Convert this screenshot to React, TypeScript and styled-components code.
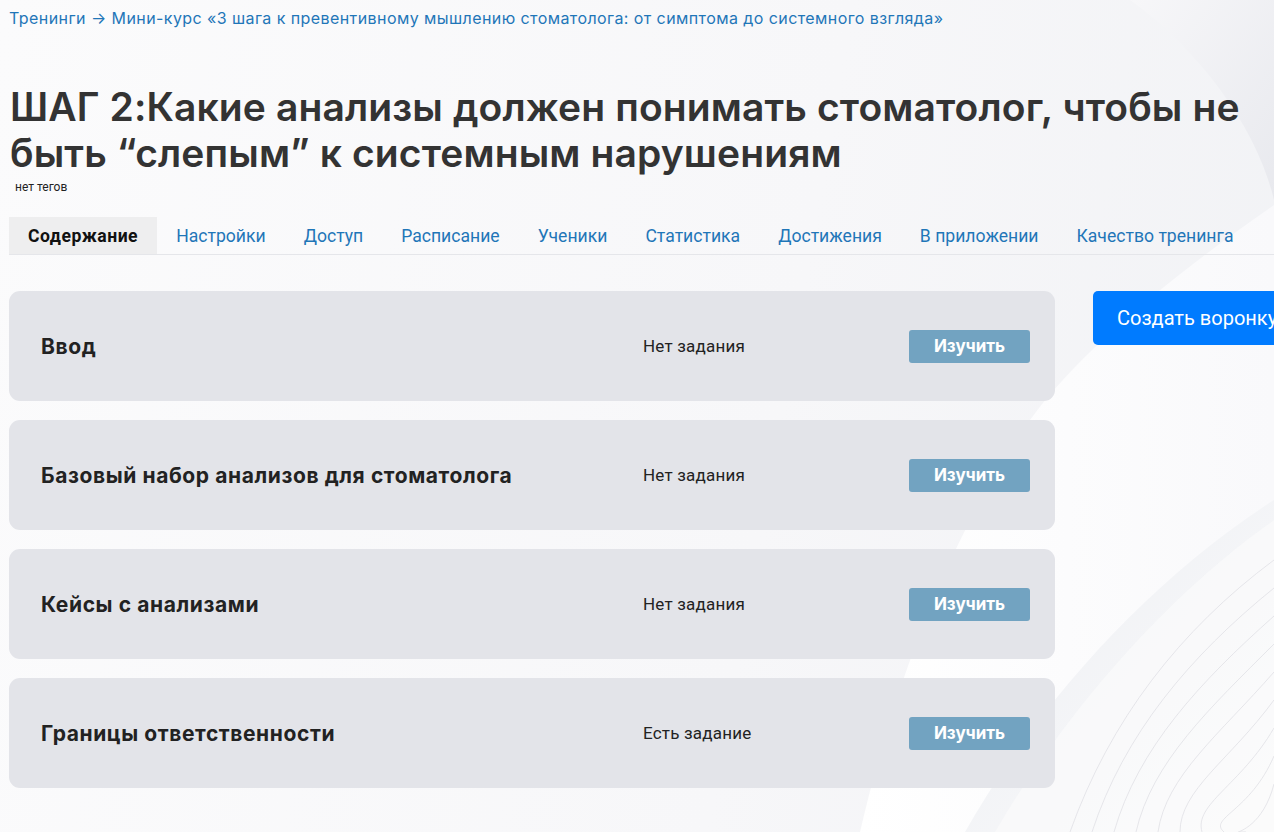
import * as React from 'react';
import styled, { createGlobalStyle } from 'styled-components';

const GlobalStyle = createGlobalStyle`
  html, body {
    margin: 0;
    padding: 0;
    height: 100%;
    overflow: hidden;
    background: #f6f6f8;
  }
  * {
    box-sizing: border-box;
  }
`;

const Page = styled.div`
  position: relative;
  width: 1274px;
  height: 832px;
  overflow: hidden;
  background: linear-gradient(100deg, #fbfbfc 0%, #f7f7f9 60%, #f1f2f5 100%);
  font-family: Roboto, 'Noto Sans', sans-serif;
`;

const Backdrop = styled.svg`
  position: absolute;
  inset: 0;
  width: 1274px;
  height: 832px;
  pointer-events: none;
`;

const Content = styled.div`
  position: relative;
  padding: 8px 0 0 9px;
`;

const Breadcrumb = styled.div`
  font-family: Inter, 'Noto Sans', sans-serif;
  font-size: 16px;
  line-height: 20px;
  color: #1f76b8;
  letter-spacing: 0.42px;
  white-space: nowrap;
`;

const Crumb = styled.a`
  color: inherit;
  text-decoration: none;
`;

const Title = styled.h1`
  margin: 56px 0 0 1px;
  font-family: Inter, 'Noto Sans', sans-serif;
  font-weight: 600;
  font-size: 39px;
  line-height: 46px;
  letter-spacing: 0.12px;
  color: #333333;
  white-space: nowrap;
`;

const Tags = styled.div`
  margin: 4px 0 0 6px;
  font-size: 12px;
  line-height: 14px;
  color: #222;
`;

const TabBar = styled.nav`
  display: flex;
  margin-top: 23px;
  height: 38px;
  border-bottom: 1px solid #e5e6ea;
`;

const Tab = styled.a<{ $active?: boolean }>`
  display: flex;
  align-items: center;
  height: 37px;
  padding: 0 19px;
  font-size: 17.6px;
  font-weight: ${({ $active }) => ($active ? 700 : 400)};
  letter-spacing: ${({ $active }) => ($active ? '0.5px' : '0')};
  color: ${({ $active }) => ($active ? '#111' : '#1f76b8')};
  background: ${({ $active }) => ($active ? '#eeeeef' : 'transparent')};
  text-decoration: none;
  white-space: nowrap;
`;

const Body = styled.div`
  display: flex;
  align-items: flex-start;
  gap: 38px;
  margin-top: 36px;
`;

const Lessons = styled.div`
  display: flex;
  flex-direction: column;
  gap: 19px;
  width: 1046px;
  flex-shrink: 0;
`;

const LessonCard = styled.div`
  display: grid;
  grid-template-columns: 602px 266px 121px;
  align-items: center;
  height: 110px;
  padding-left: 32px;
  background: #e3e4e9;
  border-radius: 11px;
`;

const LessonName = styled.div`
  font-family: Inter, 'Noto Sans', sans-serif;
  font-weight: 700;
  font-size: 21px;
  letter-spacing: 0.6px;
  color: #222;
  white-space: nowrap;
`;

const TaskState = styled.div`
  font-size: 17px;
  letter-spacing: 0.2px;
  color: #222;
`;

const StudyButton = styled.button`
  height: 33px;
  border: 0;
  border-radius: 3px;
  background: #72a3c1;
  color: #fff;
  font-family: Inter, 'Noto Sans', sans-serif;
  font-weight: 700;
  font-size: 17px;
  cursor: pointer;
`;

const FunnelButton = styled.button`
  flex-shrink: 0;
  height: 54px;
  padding: 0 24px;
  border: 0;
  border-radius: 5px;
  background: #007bff;
  color: #fff;
  font-family: Roboto, 'Noto Sans', sans-serif;
  font-size: 20px;
  white-space: nowrap;
  cursor: pointer;
`;

const tabs = [
  'Содержание',
  'Настройки',
  'Доступ',
  'Расписание',
  'Ученики',
  'Статистика',
  'Достижения',
  'В приложении',
  'Качество тренинга',
];

const lessons = [
  { name: 'Ввод', task: 'Нет задания' },
  { name: 'Базовый набор анализов для стоматолога', task: 'Нет задания' },
  { name: 'Кейсы с анализами', task: 'Нет задания' },
  { name: 'Границы ответственности', task: 'Есть задание' },
];

const Decoration = () => (
  <Backdrop viewBox="0 0 1274 832">
    <defs>
      <linearGradient id="topArc" x1="0" y1="0" x2="1" y2="1">
        <stop offset="0" stopColor="#f7f7f9" />
        <stop offset="1" stopColor="#e8e9ee" />
      </linearGradient>
      <linearGradient id="band" x1="0" y1="0" x2="1" y2="0">
        <stop offset="0" stopColor="#ffffff" />
        <stop offset="1" stopColor="#f9f9fb" />
      </linearGradient>
      <linearGradient id="lower" x1="0" y1="0" x2="1" y2="1">
        <stop offset="0" stopColor="#edeff3" />
        <stop offset="1" stopColor="#fafafb" />
      </linearGradient>
    </defs>
    <path d="M1130 0 C1200 50 1258 130 1274 200 L1274 0 Z" fill="url(#topArc)" />
    <path d="M1274 205 C1180 270 1080 350 1030 420 C960 520 900 660 860 832 L1274 832 Z" fill="url(#band)" />
    <path d="M1274 500 C1150 580 1040 700 965 832 L1274 832 Z" fill="url(#lower)" />
    <path d="M1274 520 C1160 600 1060 720 995 832 L1274 832 Z" fill="#fbfbfc" opacity="0.6" />
    {Array.from({ length: 9 }).map((_, i) => (
      <path
        key={i}
        d={`M1274 ${560 + i * 28} C${1180 + i * 10} ${630 + i * 26} ${1110 + i * 14} ${720 + i * 14} ${1070 + i * 22} 832`}
        fill="none"
        stroke="#dcdde2"
        strokeWidth="0.7"
      />
    ))}
  </Backdrop>
);

export default function App() {
  return (
    <>
      <GlobalStyle />
      <Page>
        <Decoration />
        <Content>
          <Breadcrumb>
            <Crumb href="#">Тренинги</Crumb> →{' '}
            <Crumb href="#">
              Мини-курс «3 шага к превентивному мышлению стоматолога: от симптома до системного взгляда»
            </Crumb>
          </Breadcrumb>
          <Title>
            ШАГ 2:Какие анализы должен понимать стоматолог, чтобы не
            <br />
            быть “слепым” к системным нарушениям
          </Title>
          <Tags>нет тегов</Tags>
          <TabBar>
            {tabs.map((t, i) => (
              <Tab key={t} href="#" $active={i === 0}>
                {t}
              </Tab>
            ))}
          </TabBar>
          <Body>
            <Lessons>
              {lessons.map((l) => (
                <LessonCard key={l.name}>
                  <LessonName>{l.name}</LessonName>
                  <TaskState>{l.task}</TaskState>
                  <StudyButton>Изучить</StudyButton>
                </LessonCard>
              ))}
            </Lessons>
            <FunnelButton>Создать воронку</FunnelButton>
          </Body>
        </Content>
      </Page>
    </>
  );
}
